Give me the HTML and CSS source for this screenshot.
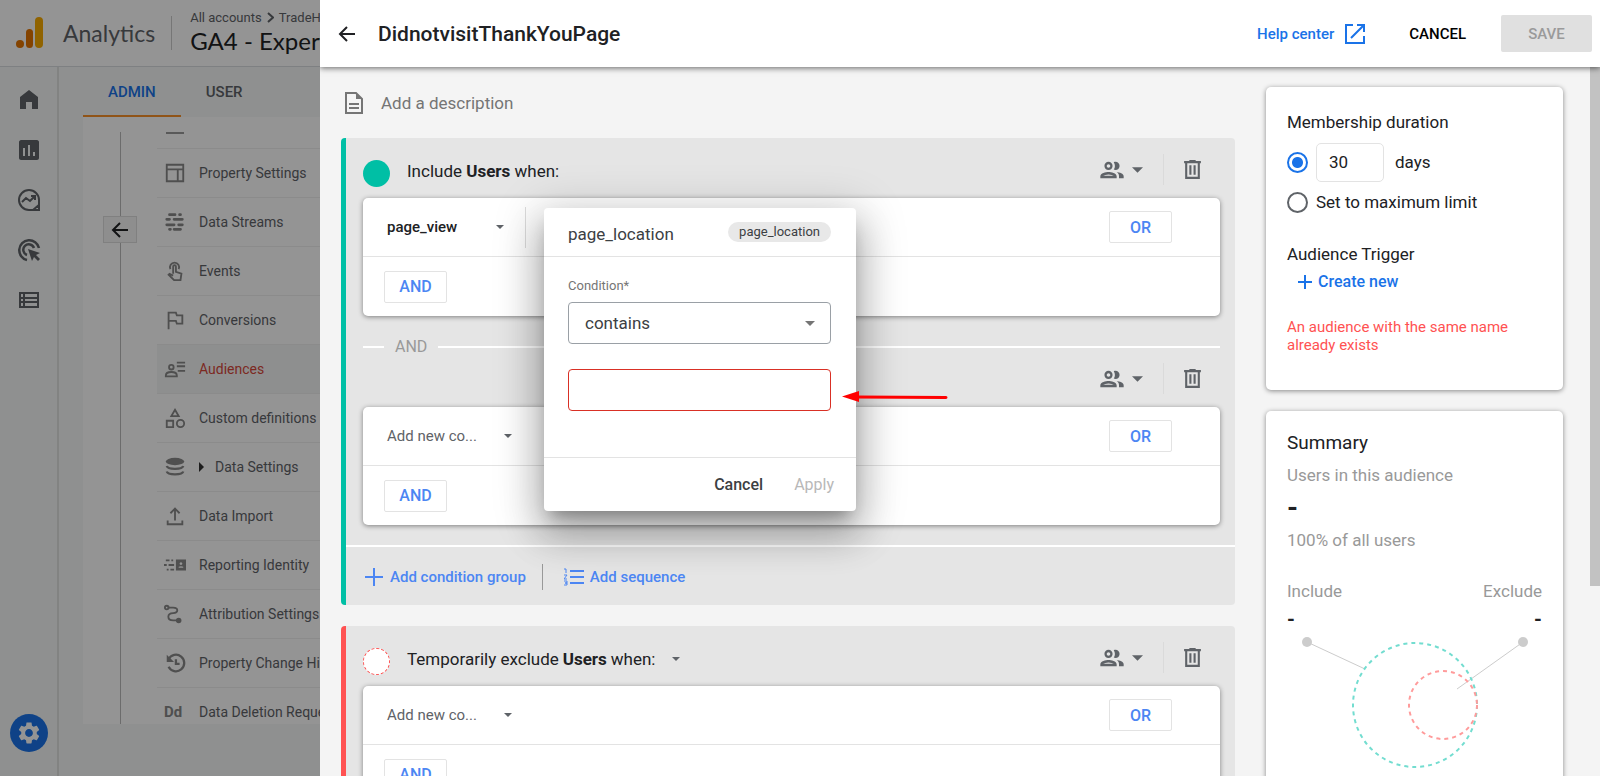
FILE: index.html
```html
<!DOCTYPE html>
<html lang="en">
<head>
  <meta charset="UTF-8" />
  <title>Analytics - Audience builder</title>
  <link rel="stylesheet" href="styles.css">
</head>
<body>

  <!-- shared icons -->
  <svg class="defs" width="0" height="0" aria-hidden="true">
    <symbol id="people" viewBox="0 0 24 24"><path d="M9 13.75c-2.34 0-7 1.17-7 3.5V19h14v-1.75c0-2.33-4.66-3.5-7-3.5zM4.34 17c.84-.58 2.87-1.25 4.66-1.25s3.82.67 4.66 1.25H4.34zM9 12c1.93 0 3.5-1.57 3.5-3.5S10.93 5 9 5 5.5 6.57 5.5 8.5 7.07 12 9 12zm0-5c.83 0 1.5.67 1.5 1.5S9.83 10 9 10s-1.5-.67-1.5-1.5S8.17 7 9 7zm7.04 6.81c1.16.84 1.96 1.96 1.96 3.44V19h4v-1.75c0-2.02-3.5-3.17-5.96-3.44zM15 12c1.93 0 3.5-1.57 3.5-3.5S16.93 5 15 5c-.54 0-1.04.13-1.5.35.63.89 1 1.98 1 3.15s-.37 2.26-1 3.15c.46.22.96.35 1.5.35z"/></symbol>
    <symbol id="trash" viewBox="0 0 20 20"><path fill-rule="evenodd" d="M2 2h5V1h6v1h5v2h-1v15H3V4H2zm3 2v13h10V4zm2 2h2v9H7zm4 0h2v9h-2z"/></symbol>
    <symbol id="caret" viewBox="0 0 10 5"><path d="M0 0h10L5 5z"/></symbol>
    <symbol id="back" viewBox="0 0 18 18"><path d="M17 9H2M9 2L2 9l7 7" fill="none" stroke="currentColor" stroke-width="2"/></symbol>
  </svg>

  <div class="app">
    <header class="topbar">
      <svg class="logo" width="28" height="32" viewBox="0 0 28 32">
        <circle cx="4" cy="27" r="4" fill="#e37400"/>
        <rect x="10" y="12" width="7" height="19" rx="3.5" fill="#e37400"/>
        <rect x="19" y="0" width="8" height="31" rx="4" fill="#f9ab00"/>
      </svg>
      <span class="brand">Analytics</span>
      <div class="account">
        <div class="crumbs">All accounts
          <svg width="7" height="11" viewBox="0 0 7 11"><path d="M1 1l5 4.500-5 4.500" fill="none" stroke="currentColor" stroke-width="2"/></svg>
          TradeHouse</div>
        <div class="property">GA4 - Expert</div>
      </div>
    </header>

    <div class="workspace">
      <nav class="rail">
        <a href="#" aria-label="Home"><svg width="24" height="24" viewBox="0 0 24 24"><path d="M3 21V9l9-7 9 7v12h-6v-7H9v7z"/></svg></a>
        <a href="#" aria-label="Reports"><svg width="24" height="24" viewBox="0 0 24 24"><path fill-rule="evenodd" d="M4 2h16c1 0 2 1 2 2v16c0 1-1 2-2 2H4c-1 0-2-1-2-2V4c0-1 1-2 2-2zm2 8v8h2v-8zm5-3v11h2V7zm5 7v4h2v-4z"/></svg></a>
        <a href="#" aria-label="Explore"><svg width="24" height="24" viewBox="0 0 24 24"><path d="M12 2a10 10 0 1 0 0 20h10V12A10 10 0 0 0 12 2z" fill="none" stroke="currentColor" stroke-width="2"/><path d="M22 17v5h-6zM5 14l4-4 4 3 5-5M14 8h4v4" fill="none" stroke="currentColor" stroke-width="2"/></svg></a>
        <a href="#" aria-label="Advertising"><svg width="24" height="24" viewBox="0 0 24 24"><path d="M10 22A10 10 0 1 1 22 10M10 17a5.500 5.500 0 1 1 7-7" fill="none" stroke="currentColor" stroke-width="2.500"/><path d="M11 11l12 4-4 2 4 4-2 2-4-4-2 4z"/></svg></a>
        <a href="#" aria-label="Configure"><svg width="24" height="24" viewBox="0 0 24 24"><path fill-rule="evenodd" d="M2 4h20v16H2zm2 2v3h2V6zm4 0v3h12V6zm-4 5v2h2v-2zm4 0v2h12v-2zm-4 4v3h2v-3zm4 0v3h12v-3z"/></svg></a>
        <a href="#" class="gear" aria-label="Admin"><svg width="26" height="26" viewBox="0 0 24 24"><path d="M19.14 12.94c.04-.3.06-.61.06-.94 0-.32-.02-.64-.07-.94l2.03-1.58c.18-.14.23-.41.12-.61l-1.920-3.320c-.12-.22-.37-.29-.59-.22l-2.390.96c-.5-.38-1.030-.7-1.620-.94l-.36-2.540c-.04-.24-.24-.41-.48-.41h-3.840c-.24 0-.43.17-.47.41l-.36 2.540c-.59.24-1.130.57-1.620.94l-2.390-.96c-.22-.08-.47 0-.59.22L2.740 8.870c-.12.21-.08.47.12.61l2.030 1.580c-.05.3-.09.63-.09.94s.02.64.07.94l-2.030 1.580c-.18.14-.23.41-.12.61l1.920 3.320c.12.22.37.29.59.22l2.390-.96c.5.38 1.030.7 1.620.94l.36 2.540c.05.24.24.41.48.41h3.840c.24 0 .44-.17.47-.41l.36-2.540c.59-.24 1.130-.56 1.620-.94l2.390.96c.22.08.47 0 .59-.22l1.920-3.320c.12-.22.07-.47-.12-.61l-2.010-1.580zM12 15.600c-1.980 0-3.600-1.620-3.600-3.600s1.620-3.600 3.600-3.600 3.600 1.620 3.600 3.600-1.620 3.600-3.600 3.600z"/></svg></a>
      </nav>

      <div class="admin">
        <div class="tabs">
          <a href="#" class="tab active">ADMIN</a>
          <a href="#" class="tab">USER</a>
        </div>
        <div class="panel">
          <div class="track">
            <button class="collapse" aria-label="Collapse"><svg width="18" height="18"><use href="#back"/></svg></button>
          </div>
          <ul class="menu">
            <li class="cut"></li>
            <li><svg viewBox="0 0 24 24"><path d="M3 3h18v18H3zM3 8h18M15 8v13" fill="none" stroke="currentColor" stroke-width="2"/></svg><a href="#">Property Settings</a></li>
            <li><svg viewBox="0 0 24 24"><path d="M6 4h6M17 4h1M3 9h3M11 9h9M3 15h8M16 15h4M6 20h1M11 20h7" fill="none" stroke="currentColor" stroke-width="3" stroke-linecap="round"/></svg><a href="#">Data Streams</a></li>
            <li><svg viewBox="0 0 24 24"><path d="M7 10a5 5 0 1 1 9 0M10 15V7a1.500 1.500 0 0 1 3 0v6l6 2-1 7h-7l-6-6 1-1 4 2" fill="none" stroke="currentColor" stroke-width="2"/></svg><a href="#">Events</a></li>
            <li><svg viewBox="0 0 24 24"><path d="M5 22V4h8l1 3h6v9h-6l-1-3H5" fill="none" stroke="currentColor" stroke-width="2"/></svg><a href="#">Conversions</a></li>
            <li class="current"><svg viewBox="0 0 24 24"><path d="M2 20v-1c0-5 12-5 12 0v1z" fill="none" stroke="currentColor" stroke-width="2"/><circle cx="8" cy="10" r="2.500" fill="none" stroke="currentColor" stroke-width="2"/><path d="M14 5h9M14 9h9M15 14h8" stroke="currentColor" stroke-width="2"/></svg><a href="#">Audiences</a></li>
            <li><svg viewBox="0 0 24 24"><path d="M12 3l4 7H8zM3 15h7v7H3z" fill="none" stroke="currentColor" stroke-width="2"/><circle cx="18" cy="18" r="4" fill="none" stroke="currentColor" stroke-width="2"/></svg><a href="#">Custom definitions</a></li>
            <li><svg viewBox="0 0 24 24"><ellipse cx="12" cy="6" rx="10" ry="4"/><path d="M3 11c1 4 17 4 18 0M3 17c1 4 17 4 18 0" fill="none" stroke="currentColor" stroke-width="2.500"/></svg><span class="expand"></span><a href="#">Data Settings</a></li>
            <li><svg viewBox="0 0 24 24"><path d="M12 17V4M7 9l5-5 5 5M4 17v4h16v-4" fill="none" stroke="currentColor" stroke-width="2"/></svg><a href="#">Data Import</a></li>
            <li><svg viewBox="0 0 24 24"><path d="M2 7h4M8 7h2M0 12h3M5 12h6M3 17h2M7 17h4" stroke="currentColor" stroke-width="2"/><path fill-rule="evenodd" d="M13 6h11v12H13zm3 9h5v-1c-1-1-4-1-5 0zm2.500-6a1.500 1.500 0 1 0 .01 0z"/></svg><a href="#">Reporting Identity</a></li>
            <li><svg viewBox="0 0 24 24"><path d="M4 5h6c6 0 6 6 0 6-7 0-7 8 0 8h4" fill="none" stroke="currentColor" stroke-width="2"/><circle cx="3" cy="5" r="2" fill="none" stroke="currentColor" stroke-width="2"/><circle cx="16" cy="19" r="3"/></svg><a href="#">Attribution Settings</a></li>
            <li><svg viewBox="0 0 24 24"><path d="M5 8a9 9 0 1 1 0 8M13 8v5h4" fill="none" stroke="currentColor" stroke-width="2.500"/><path d="M3 3v8h8z"/></svg><a href="#">Property Change History</a></li>
            <li><b class="dd">Dd</b><a href="#">Data Deletion Requests</a></li>
          </ul>
        </div>
      </div>
    </div>
  </div>

  <div class="scrim"></div>

  <div class="drawer">
    <header class="bar">
      <button class="plain" aria-label="Back"><svg width="18" height="18"><use href="#back"/></svg></button>
      <h1>DidnotvisitThankYouPage</h1>
      <a href="#" class="help">Help center
        <svg width="20" height="20" viewBox="0 0 20 20"><path d="M8 1H1v18h18v-7M12 1h7v7M19 1L6 14" fill="none" stroke="currentColor" stroke-width="2"/></svg>
      </a>
      <button class="plain cancel">CANCEL</button>
      <button class="save" disabled>SAVE</button>
    </header>

    <div class="content">
      <main class="builder">
        <div class="description">
          <svg width="18" height="22" viewBox="0 0 18 22"><path d="M1 1h10l6 6v14H1z" fill="none" stroke="currentColor" stroke-width="2"/><path d="M11 1v6h6zM4 11h10v2H4zM4 15h10v2H4z"/></svg>
          <span>Add a description</span>
        </div>

        <section class="group include">
          <div class="group-head">
            <span class="dot"></span>
            <p>Include <b>Users</b> when:</p>
            <div class="tools">
              <button class="plain scope" aria-label="Scope"><svg width="28" height="28"><use href="#people"/></svg><svg width="11" height="6"><use href="#caret"/></svg></button>
              <button class="plain trash" aria-label="Delete"><svg width="21" height="21"><use href="#trash"/></svg></button>
            </div>
          </div>
          <div class="card rules">
            <div class="rule">
              <button class="plain pick chosen">page_view <svg width="8" height="4"><use href="#caret"/></svg></button>
              <button class="op">OR</button>
            </div>
            <div class="rule"><button class="op">AND</button></div>
          </div>

          <div class="joiner"><span>AND</span></div>
          <div class="group-head">
            <div class="tools">
              <button class="plain scope" aria-label="Scope"><svg width="28" height="28"><use href="#people"/></svg><svg width="11" height="6"><use href="#caret"/></svg></button>
              <button class="plain trash" aria-label="Delete"><svg width="21" height="21"><use href="#trash"/></svg></button>
            </div>
          </div>
          <div class="card rules">
            <div class="rule">
              <button class="plain pick">Add new co... <svg width="8" height="4"><use href="#caret"/></svg></button>
              <button class="op">OR</button>
            </div>
            <div class="rule"><button class="op">AND</button></div>
          </div>

          <div class="group-foot">
            <button class="plain"><svg width="18" height="18" viewBox="0 0 18 18"><path d="M9 0v18M0 9h18" stroke="currentColor" stroke-width="2"/></svg>Add condition group</button>
            <button class="plain"><svg width="20" height="18" viewBox="0 0 20 18"><path d="M6 3h14M6 9h14M6 15h14" stroke="currentColor" stroke-width="2"/><path d="M0 1h2v4M0 7h3L0 11h3M0 13h3v2H1h2v2H0" fill="none" stroke="currentColor"/></svg>Add sequence</button>
          </div>
        </section>

        <section class="group exclude">
          <div class="group-head">
            <span class="dot"></span>
            <button class="plain when">Temporarily exclude <b>Users</b> when: <svg width="8" height="4"><use href="#caret"/></svg></button>
            <div class="tools">
              <button class="plain scope" aria-label="Scope"><svg width="28" height="28"><use href="#people"/></svg><svg width="11" height="6"><use href="#caret"/></svg></button>
              <button class="plain trash" aria-label="Delete"><svg width="21" height="21"><use href="#trash"/></svg></button>
            </div>
          </div>
          <div class="card rules">
            <div class="rule">
              <button class="plain pick">Add new co... <svg width="8" height="4"><use href="#caret"/></svg></button>
              <button class="op">OR</button>
            </div>
            <div class="rule"><button class="op">AND</button></div>
          </div>
        </section>
      </main>

      <aside class="side">
        <div class="card membership">
          <h2>Membership duration</h2>
          <div class="choice">
            <input type="radio" name="duration" id="limited" checked aria-label="Limited duration">
            <input type="text" id="days" value="30">
            <label for="days">days</label>
          </div>
          <div class="choice short">
            <input type="radio" name="duration" id="max">
            <label for="max">Set to maximum limit</label>
          </div>
          <h2 class="trigger">Audience Trigger</h2>
          <button class="plain create"><svg width="14" height="14" viewBox="0 0 14 14"><path d="M7 0v14M0 7h14" stroke="currentColor" stroke-width="2"/></svg>Create new</button>
          <p class="error">An audience with the same name already exists</p>
        </div>

        <div class="card summary">
          <h3>Summary</h3>
          <p>Users in this audience</p>
          <b class="total">-</b>
          <p>100% of all users</p>
          <div class="split"><span>Include</span><span>Exclude</span></div>
          <div class="split values"><b>-</b><b>-</b></div>
          <svg class="venn" width="256" height="140" viewBox="0 0 256 140">
            <g fill="none" stroke="#ccc"><path d="M20 11l58 27M236 11l-66 47"/></g>
            <circle cx="20" cy="11" r="5" fill="#ccc"/><circle cx="236" cy="11" r="5" fill="#ccc"/>
            <g fill="none" stroke-width="2" stroke-dasharray="4 4">
              <circle cx="128" cy="74" r="62" stroke="#73ddd0"/>
              <circle cx="156" cy="74" r="34" stroke="#ff9b9b"/>
            </g>
          </svg>
        </div>
      </aside>
    </div>

    <div class="thumb"></div>

    <form class="popup">
      <div class="popup-head"><span>page_location</span><span class="chip">page_location</span></div>
      <div class="popup-body">
        <label for="condition">Condition*</label>
        <div class="select">
          <select id="condition"><option>contains</option></select>
          <svg width="10" height="5"><use href="#caret"/></svg>
        </div>
        <input type="text" aria-label="Value" class="invalid">
      </div>
      <div class="popup-foot">
        <button type="button" class="plain">Cancel</button>
        <button type="button" class="plain" disabled>Apply</button>
      </div>
    </form>

    <svg class="pointer" width="106" height="12" viewBox="0 0 106 12"><path d="M14 6l90 .5" stroke="#f00" stroke-width="3" stroke-linecap="round"/><path d="M0 5.500L17 0v11z" fill="#f00"/></svg>
  </div>

</body>
</html>
```
FILE: styles.css
```css
:root {
  --blue: #1a73e8;
  --link: #4c86f3;
  --grey: #5f6368;
  --line: #e3e3e3;
}

* {
  box-sizing: border-box;
}

body {
  margin: 0;
  height: 100vh;
  overflow: hidden;
  position: relative;
  font-family: Roboto, "Liberation Sans", sans-serif;
  font-size: 16px;
  color: #202124;
}

h1, h2, h3, p, ul {
  margin: 0;
  padding: 0;
  font-weight: 400;
}

a {
  color: inherit;
  text-decoration: none;
}

svg {
  fill: currentColor;
  flex: none;
}

button, input, select {
  font: inherit;
  color: inherit;
}

.defs {
  position: absolute;
}

.plain {
  display: flex;
  align-items: center;
  border: none;
  background: none;
  padding: 0;
  white-space: nowrap;
}

/* page behind the drawer */
.app {
  height: 100%;
  display: flex;
  flex-direction: column;
  background: #f6f9f8;
}

.topbar {
  height: 67px;
  flex: none;
  display: flex;
  align-items: center;
  padding-left: 16px;
  background: #fff;
  border-bottom: 1px solid #dadce0;
}

.brand {
  font-family: Lato, sans-serif;
  font-size: 23px;
  color: var(--grey);
  margin-left: 19px;
}

.account {
  margin-left: 16px;
  padding-left: 18px;
  white-space: nowrap;
  border-left: 1px solid #ccc;
  height: 34px;
  display: flex;
  flex-direction: column;
  justify-content: center;
}

.crumbs {
  font-size: 13px;
  line-height: 20px;
  margin-top: -4px;
  color: var(--grey);
}

.crumbs svg {
  margin: 0 2px;
  vertical-align: -1px;
}

.property {
  font-family: Lato, sans-serif;
  font-size: 24px;
  line-height: 26px;
}

.workspace {
  flex: 1;
  min-height: 0;
  display: flex;
}

.rail {
  width: 59px;
  flex: none;
  display: flex;
  flex-direction: column;
  align-items: center;
  gap: 26px;
  padding: 21px 0 24px;
  border-right: 2px solid #e0e2e1;
  color: var(--grey);
}

.rail a {
  height: 24px;
}

.rail .gear {
  width: 38px;
  height: 38px;
  margin-top: auto;
  border-radius: 50%;
  background: var(--blue);
  color: #fff;
  display: flex;
  align-items: center;
  justify-content: center;
}

.admin {
  flex: 1;
  padding: 0 0 52px 24px;
  display: flex;
  flex-direction: column;
}

.tabs {
  display: flex;
  height: 50px;
  flex: none;
  font-size: 15px;
  font-weight: 500;
  color: var(--grey);
}

.tab {
  padding: 0 25px;
  line-height: 50px;
  border-bottom: 2px solid transparent;
}

.tab.active {
  color: var(--blue);
  border-color: #f9922a;
}

.panel {
  flex: 1;
  min-height: 0;
  overflow: hidden;
  display: flex;
  background: #fff;
}

.track {
  width: 74px;
  flex: none;
  margin-top: 15px;
  background: linear-gradient(#bbb, #bbb) 37px 0 / 1px 100% no-repeat;
}

.collapse {
  display: flex;
  align-items: center;
  justify-content: center;
  width: 34px;
  height: 27px;
  margin: 84px 0 0 20px;
  padding: 0;
  border: 1px solid #ddd;
  background: #f5f5f5;
}

.menu {
  flex: 1;
  list-style: none;
  font-size: 14px;
}

.menu li {
  height: 49px;
  display: flex;
  align-items: center;
  gap: 13px;
  padding-left: 7px;
  border-bottom: 1px solid #f0f0f0;
  color: var(--grey);
  white-space: nowrap;
}

.menu .cut {
  height: 32px;
}

.menu .cut::before {
  content: "";
  width: 18px;
  border-top: 2px solid #999;
  margin-left: 2px;
}

.menu li svg {
  width: 22px;
  height: 22px;
  color: #888;
}

.menu .current {
  background: #f4f7f6;
}

.menu .current a {
  color: #d7483b;
}

.expand {
  border: 5px solid transparent;
  border-left-color: #333;
  border-right: none;
  margin-right: -2px;
}

.dd {
  width: 22px;
  font-size: 15px;
  color: #888;
}

.scrim {
  position: absolute;
  inset: 0;
  background: rgba(0, 0, 0, .42);
}

/* drawer */
.drawer {
  position: absolute;
  inset: 0 0 0 320px;
  background: #f4f4f4;
  display: flex;
  flex-direction: column;
  overflow: hidden;
}

.bar {
  height: 67px;
  flex: none;
  display: flex;
  align-items: center;
  padding: 0 8px 0 18px;
  background: #fff;
  box-shadow: 0 1px 6px rgba(0, 0, 0, .6);
  z-index: 1;
}

.bar h1 {
  font-size: 21px;
  font-weight: 500;
  margin-left: 22px;
}

.help {
  display: flex;
  align-items: center;
  gap: 11px;
  margin-left: auto;
  color: var(--blue);
  font-weight: 500;
  font-size: 15px;
}

.cancel {
  margin: 0 35px 0 44px;
  font-size: 15px;
  font-weight: 500;
  color: #000;
}

.save {
  width: 91px;
  height: 37px;
  border: none;
  border-radius: 2px;
  background: #e0e0e0;
  color: #9a9a9a;
  font-size: 15px;
  font-weight: 500;
}

.content {
  flex: 1;
  min-height: 0;
  display: flex;
  align-items: flex-start;
  gap: 31px;
  padding: 20px 37px 0 21px;
}

.builder {
  flex: 1;
}

.description {
  display: flex;
  align-items: center;
  gap: 18px;
  height: 51px;
  padding: 0 0 20px 4px;
  font-size: 17px;
  color: #757575;
}

.group {
  border-left: 5px solid #00bfa5;
  border-radius: 4px;
  background: #e5e5e5;
  margin-bottom: 21px;
}

.group.exclude {
  border-color: #ff5252;
}

.group-head {
  height: 60px;
  display: flex;
  align-items: center;
  padding: 0 16px 0 17px;
  font-size: 17px;
}

.dot {
  width: 27px;
  height: 27px;
  margin: 10px 17px 0 0;
  border-radius: 50%;
  background: #00bfa5;
}

.group-head p,
.when {
  padding-top: 6px;
}

.group-head b {
  font-weight: 700;
}

.exclude .dot {
  background: #fff;
  border: 1px dashed #ff5252;
}

.when {
  gap: 4px;
}

.when svg {
  margin-left: 12px;
  color: var(--grey);
}

.tools {
  display: flex;
  align-items: center;
  margin-left: auto;
  margin-top: 3px;
  color: var(--grey);
}

.scope {
  gap: 6px;
  padding-right: 20px;
  height: 31px;
  border-right: 1px solid #dadada;
}

.trash {
  padding: 0 16px 0 18px;
}

.card {
  background: #fff;
  border-radius: 5px;
  box-shadow: 0 1px 5px rgba(0, 0, 0, .45);
}

.rules {
  margin: 0 15px 0 17px;
}

.rule {
  height: 58px;
  display: flex;
  align-items: center;
  justify-content: space-between;
  padding: 0 48px 0 21px;
}

.rule + .rule {
  height: 60px;
  border-top: 1px solid var(--line);
}

.pick {
  width: 142px;
  height: 41px;
  justify-content: space-between;
  margin-left: 3px;
  padding-right: 17px;
  font-size: 15px;
  color: var(--grey);
}

.pick.chosen {
  width: 139px;
  font-weight: 500;
  color: #202124;
  padding-right: 21px;
  border-right: 1px solid #ddd;
}

.pick svg {
  color: var(--grey);
}

.op {
  width: 63px;
  height: 32px;
  padding: 0;
  border: 1px solid var(--line);
  border-radius: 2px;
  background: #fff;
  color: var(--link);
  font-weight: 500;
}

.joiner {
  display: flex;
  align-items: center;
  gap: 11px;
  height: 31px;
  margin: 0 15px 0 17px;
  padding-top: 30px;
  color: #999;
}

.joiner::before,
.joiner::after {
  content: "";
  height: 2px;
  width: 21px;
  background: #fff;
}

.joiner::after {
  flex: 1;
}

.group-foot {
  display: flex;
  align-items: center;
  height: 60px;
  margin-top: 20px;
  padding: 2px 0 0 19px;
  border-top: 2px solid #fff;
  color: var(--link);
  font-size: 15px;
  font-weight: 500;
}

.group-foot button {
  gap: 7px;
}

.group-foot button + button {
  height: 26px;
  margin-left: 16px;
  padding-left: 21px;
  border-left: 1px solid #999;
  gap: 6px;
}

.side {
  width: 297px;
}

.membership {
  height: 303px;
  padding: 24px 21px;
  margin-bottom: 21px;
}

.side h2 {
  font-size: 17px;
  line-height: 22px;
}

.choice {
  display: flex;
  align-items: center;
  height: 40px;
  margin-top: 9px;
  font-size: 17px;
}

.choice.short {
  margin-top: 0;
}

.choice input[type="radio"] {
  appearance: none;
  width: 21px;
  height: 21px;
  margin: 0 8px 0 0;
  border: 2px solid var(--grey);
  border-radius: 50%;
}

.choice input[type="radio"]:checked {
  border-color: var(--blue);
  background: radial-gradient(var(--blue) 5px, #fff 6px);
}

.choice input[type="text"] {
  width: 68px;
  height: 39px;
  margin-right: 11px;
  padding: 0 12px;
  border: 1px solid var(--line);
  border-radius: 5px;
}

.side .trigger {
  margin-top: 21px;
}

.create {
  gap: 6px;
  margin: 7px 0 0 11px;
  color: var(--blue);
  line-height: 20px;
  font-weight: 500;
}

.error {
  margin-top: 26px;
  color: #ff5252;
  font-size: 15px;
  line-height: 18px;
}

.summary {
  padding: 20px 21px;
  color: #999;
}

.summary h3 {
  font-size: 19px;
  line-height: 24px;
  color: #202124;
}

.summary p,
.split {
  font-size: 17px;
  line-height: 20px;
}

.summary p {
  margin-top: 10px;
}

.total {
  display: block;
  height: 35px;
  font-size: 28px;
  line-height: 46px;
  color: #202124;
}

.split {
  display: flex;
  justify-content: space-between;
  margin-top: 31px;
}

.split.values {
  margin-top: 8px;
  font-size: 20px;
  color: #202124;
}

.venn {
  display: block;
  margin: 2px auto 0;
}

.thumb {
  position: absolute;
  top: 67px;
  right: 0;
  width: 10px;
  height: 519px;
  background: #c2c2c2;
}

/* condition popup */
.popup {
  position: absolute;
  left: 224px;
  top: 208px;
  width: 312px;
  background: #fff;
  border-radius: 4px;
  box-shadow: 0 11px 15px -7px rgba(0, 0, 0, .3), 0 24px 38px 3px rgba(0, 0, 0, .2), 0 9px 46px 8px rgba(0, 0, 0, .18);
  color: #3c4043;
}

.popup-head {
  display: flex;
  justify-content: space-between;
  align-items: center;
  height: 49px;
  padding: 4px 25px 0 24px;
  border-bottom: 1px solid var(--line);
  font-size: 17px;
}

.chip {
  padding: 0 11px;
  margin-bottom: 4px;
  line-height: 20px;
  font-size: 13px;
  border-radius: 10px;
  background: #e8e8e8;
}

.popup-body {
  padding: 20px 25px 0 24px;
  height: 200px;
}

.popup-body label {
  display: block;
  font-size: 13px;
  line-height: 18px;
  margin-bottom: 7px;
  color: #757575;
}

.select {
  position: relative;
}

.popup select,
.popup input {
  display: block;
  width: 100%;
  height: 42px;
  padding: 0 16px;
  border: 1px solid #9aa0a6;
  border-radius: 4px;
  background: #fff;
  appearance: none;
  font-size: 17px;
}

.select svg {
  position: absolute;
  right: 16px;
  top: 19px;
  color: #757575;
}

.popup .invalid {
  margin-top: 25px;
  border-color: #d93025;
}

.popup-foot {
  display: flex;
  justify-content: flex-end;
  align-items: center;
  gap: 31px;
  height: 54px;
  padding-right: 22px;
  border-top: 1px solid var(--line);
  font-weight: 500;
}

.popup-foot button:disabled {
  color: #b8b8b8;
  font-weight: 400;
}

.pointer {
  position: absolute;
  left: 522px;
  top: 391px;
}
```
